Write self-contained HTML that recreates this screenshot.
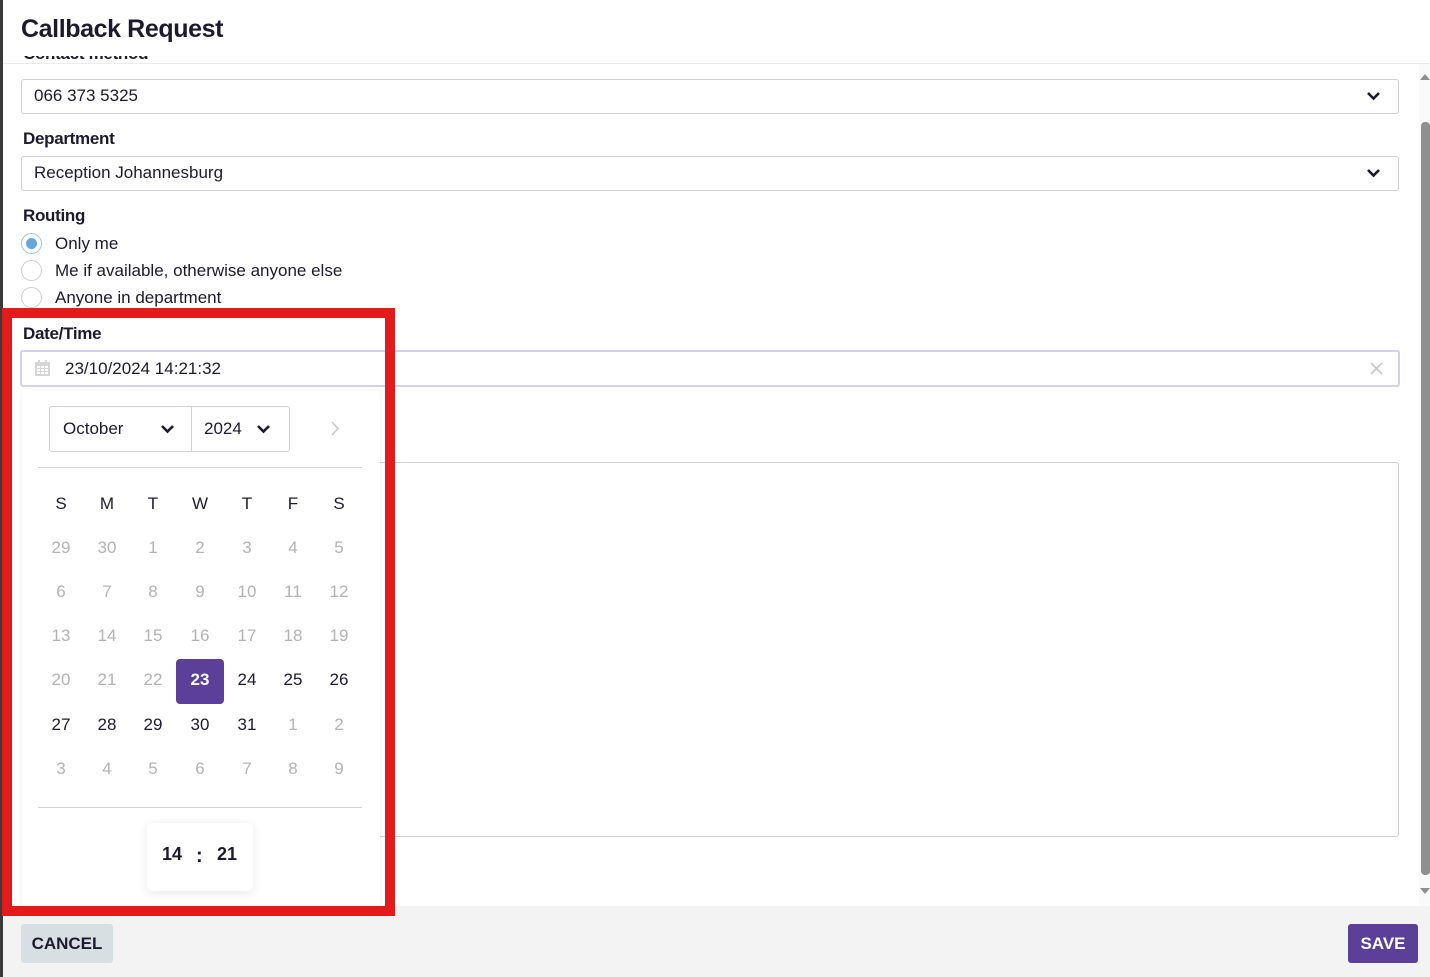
<!DOCTYPE html>
<html><head><meta charset="utf-8"><style>
*{box-sizing:border-box;margin:0;padding:0}
body{width:1430px;height:977px;overflow:hidden;background:#fff;font-family:"Liberation Sans",sans-serif;color:#1e1a2e;position:relative}
.a{position:absolute}
.lbl{font-weight:bold;font-size:17px;letter-spacing:-0.3px}
.inp{border:1px solid #d0d0d0;border-radius:3px;background:#fff}
.txt{font-size:17px}
.radio{width:21px;height:21px;border:1px solid #cfcfcf;border-radius:50%;background:#fff}
.d{position:absolute;width:46px;text-align:center;font-size:17px;transform:translate(-23px,-10px)}
.g{color:#b3b3b3}
</style></head><body>
<div class="a" style="left:0;top:0;width:3px;height:977px;background:#3a3a3a"></div>
<div class="a" style="left:21px;top:15px;font-size:25px;font-weight:bold;letter-spacing:-0.4px">Callback Request</div>
<div class="a" style="left:3px;top:63px;width:1427px;height:1px;background:#ececec"></div>
<div class="a" style="left:23px;top:56px;width:130px;height:8px;overflow:hidden"><div class="lbl" style="margin-top:-12px">Contact method</div></div>
<div class="a inp" style="left:21px;top:79px;width:1378px;height:35px"></div>
<div class="a txt" style="left:34px;top:86px">066 373 5325</div>
<svg class="a" style="left:1366px;top:90px" width="15" height="12" viewBox="0 0 15 12"><path d="M2 3l5.5 5.5L13 3" stroke="#1e1a2e" stroke-width="2.6" fill="none"/></svg>
<div class="a lbl" style="left:23px;top:129px">Department</div>
<div class="a inp" style="left:21px;top:156px;width:1378px;height:35px"></div>
<div class="a txt" style="left:34px;top:163px">Reception Johannesburg</div>
<svg class="a" style="left:1366px;top:167px" width="15" height="12" viewBox="0 0 15 12"><path d="M2 3l5.5 5.5L13 3" stroke="#1e1a2e" stroke-width="2.6" fill="none"/></svg>
<div class="a lbl" style="left:23px;top:206px">Routing</div>
<div class="a radio" style="left:21px;top:233px;border-color:#9cc4e4"><div style="width:11px;height:11px;border-radius:50%;background:#62a8dc;margin:4px"></div></div>
<div class="a txt" style="left:55px;top:234px">Only me</div>
<div class="a radio" style="left:21px;top:260px"></div>
<div class="a txt" style="left:55px;top:261px">Me if available, otherwise anyone else</div>
<div class="a radio" style="left:21px;top:287px"></div>
<div class="a txt" style="left:55px;top:288px">Anyone in department</div>
<div class="a lbl" style="left:23px;top:324px">Date/Time</div>
<div class="a inp" style="left:20px;top:350px;width:1380px;height:37px;border:2px solid #d6d0ef"></div>
<svg class="a" style="left:34px;top:360px" width="17" height="17" viewBox="0 0 17 17"><rect x="1" y="2" width="15" height="14" fill="#d6d6d6"/><g fill="#fff"><rect x="3" y="6" width="3" height="2"/><rect x="7" y="6" width="3" height="2"/><rect x="11" y="6" width="3" height="2"/><rect x="3" y="9" width="3" height="2"/><rect x="7" y="9" width="3" height="2"/><rect x="11" y="9" width="3" height="2"/><rect x="3" y="12" width="3" height="2"/><rect x="7" y="12" width="3" height="2"/><rect x="11" y="12" width="3" height="2"/></g><rect x="4" y="0" width="2" height="4" fill="#d6d6d6"/><rect x="11" y="0" width="2" height="4" fill="#d6d6d6"/></svg>
<div class="a txt" style="left:65px;top:359px">23/10/2024 14:21:32</div>
<svg class="a" style="left:1370px;top:362px" width="13" height="13" viewBox="0 0 13 13"><path d="M1 1l11 11M12 1L1 12" stroke="#c8c8c8" stroke-width="1.6"/></svg>
<div class="a inp" style="left:370px;top:462px;width:1029px;height:375px"></div>
<div class="a" style="left:1419px;top:64px;width:11px;height:842px;background:#fafafa"></div>
<svg class="a" style="left:1420px;top:73px" width="10" height="8"><path d="M0 7L5 1L10 7Z" fill="#8f8f8f"/></svg>
<div class="a" style="left:1421px;top:122px;width:9px;height:753px;background:#8f8f8f;border-radius:4px"></div>
<svg class="a" style="left:1420px;top:887px" width="10" height="8"><path d="M0 1L5 7L10 1Z" fill="#8f8f8f"/></svg>
<div class="a" style="left:3px;top:906px;width:1427px;height:71px;background:#f3f3f3"></div>
<div class="a" style="left:21px;top:924px;width:92px;height:39px;background:#d8dfe3;border-radius:3px;font-weight:bold;font-size:17px;text-align:center;line-height:39px">CANCEL</div>
<div class="a" style="left:1348px;top:924px;width:70px;height:39px;background:#5b3f99;border-radius:3px;font-weight:bold;font-size:17px;text-align:center;line-height:39px;color:#fff">SAVE</div>
<div class="a" style="left:22px;top:390px;width:358px;height:517px;background:#fff;border-radius:4px;box-shadow:0 1px 6px rgba(0,0,0,0.08)"></div>
<div class="a" style="left:49px;top:406px;width:241px;height:46px;border:1px solid #cfd2d6;border-radius:3px"></div>
<div class="a" style="left:191px;top:407px;width:1px;height:44px;background:#cfd2d6"></div>
<div class="a txt" style="left:63px;top:419px">October</div>
<svg class="a" style="left:160px;top:423px" width="15" height="12" viewBox="0 0 15 12"><path d="M2 3l5.5 5.5L13 3" stroke="#1e1a2e" stroke-width="2.6" fill="none"/></svg>
<div class="a txt" style="left:204px;top:419px">2024</div>
<svg class="a" style="left:256px;top:423px" width="15" height="12" viewBox="0 0 15 12"><path d="M2 3l5.5 5.5L13 3" stroke="#1e1a2e" stroke-width="2.6" fill="none"/></svg>
<svg class="a" style="left:330px;top:421px" width="10" height="15"><path d="M2 1l6 6.5L2 14" stroke="#c8c8c8" stroke-width="1.6" fill="none"/></svg>
<div class="a" style="left:38px;top:467px;width:324px;height:1px;background:#d4d4d4"></div>
<div class="a" style="left:38px;top:807px;width:324px;height:1px;background:#d4d4d4"></div>
<div class="a" style="left:176px;top:659px;width:48px;height:45px;background:#5b3f99;border-radius:4px"></div>
<div id="cal"></div>
<div class="a" style="left:147px;top:823px;width:106px;height:68px;background:#fff;border-radius:5px;box-shadow:0 2px 10px rgba(0,0,0,0.1)"></div>
<div class="a" style="left:162px;top:844px;font-size:18px;font-weight:bold">14</div>
<div class="a" style="left:196px;top:845px;font-size:20px;font-weight:bold">:</div>
<div class="a" style="left:217px;top:844px;font-size:18px;font-weight:bold">21</div>
<div class="a" style="left:2px;top:308px;width:393px;height:608px;border:10px solid #e41b1c"></div>
<script>
var xs=[61,107,153,200,247,293,339],ys=[548,592,636,680,725,769];
var h='';['S','M','T','W','T','F','S'].forEach(function(t,i){h+='<div class="d" style="left:'+xs[i]+'px;top:504px">'+t+'</div>'});
var days=[29,30,1,2,3,4,5,6,7,8,9,10,11,12,13,14,15,16,17,18,19,20,21,22,23,24,25,26,27,28,29,30,31,1,2,3,4,5,6,7,8,9];
days.forEach(function(d,k){var r=Math.floor(k/7),c=k%7;var cls='d';var st='';
if(k<24||k>=33)cls+=' g';if(k==24){st='color:#fff;font-weight:bold;';}
h+='<div class="'+cls+'" style="'+st+'left:'+xs[c]+'px;top:'+ys[r]+'px">'+d+'</div>'});
document.getElementById('cal').innerHTML=h;
</script>
</body></html>
